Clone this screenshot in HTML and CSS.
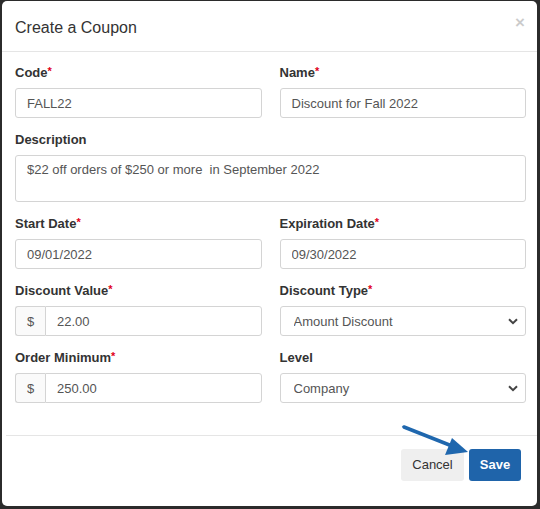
FILE: index.html
```html
<!DOCTYPE html>
<html lang="en">
<head>
    <meta charset="UTF-8">
    <meta name="viewport" content="width=device-width, initial-scale=1.0">
    <title>Create a Coupon</title>
    <link rel="stylesheet" href="styles.css">
</head>
<body>
    <div class="modal">
        <div class="modal-header">
            <h4 class="modal-title">Create a Coupon</h4>
            <button class="close" type="button">&times;</button>
        </div>
        <form class="modal-body">
            <div class="row">
                <div class="field">
                    <label>Code<span class="req">*</span></label>
                    <input type="text" value="FALL22">
                </div>
                <div class="field">
                    <label>Name<span class="req">*</span></label>
                    <input type="text" value="Discount for Fall 2022">
                </div>
            </div>
            <div class="field">
                <label>Description</label>
                <textarea>$22 off orders of $250 or more  in September 2022</textarea>
            </div>
            <div class="row">
                <div class="field">
                    <label>Start Date<span class="req">*</span></label>
                    <input type="text" value="09/01/2022">
                </div>
                <div class="field">
                    <label>Expiration Date<span class="req">*</span></label>
                    <input type="text" value="09/30/2022">
                </div>
            </div>
            <div class="row">
                <div class="field">
                    <label>Discount Value<span class="req">*</span></label>
                    <div class="input-group">
                        <span class="addon">$</span>
                        <input type="text" value="22.00">
                    </div>
                </div>
                <div class="field">
                    <label>Discount Type<span class="req">*</span></label>
                    <div class="select-wrap">
                        <select>
                            <option>Amount Discount</option>
                            <option>Percent Discount</option>
                        </select>
                        <svg class="chevron" width="10" height="7" viewBox="0 0 10 7"><path d="M1 1.2 L5 5.2 L9 1.2" fill="none" stroke="#444" stroke-width="2"/></svg>
                    </div>
                </div>
            </div>
            <div class="row">
                <div class="field">
                    <label>Order Minimum<span class="req">*</span></label>
                    <div class="input-group">
                        <span class="addon">$</span>
                        <input type="text" value="250.00">
                    </div>
                </div>
                <div class="field">
                    <label>Level</label>
                    <div class="select-wrap">
                        <select>
                            <option>Company</option>
                            <option>Location</option>
                        </select>
                        <svg class="chevron" width="10" height="7" viewBox="0 0 10 7"><path d="M1 1.2 L5 5.2 L9 1.2" fill="none" stroke="#444" stroke-width="2"/></svg>
                    </div>
                </div>
            </div>
        </form>
        <div class="modal-footer">
            <button class="btn btn-default" type="button">Cancel</button>
            <button class="btn btn-primary" type="button">Save</button>
            <!-- pointer to the save button -->
            <svg class="pointer" width="80" height="40" viewBox="0 0 80 40">
                <line x1="2" y1="2" x2="50" y2="21" stroke="#1f67ae" stroke-width="3.5" stroke-linecap="round"/>
                <polygon points="66,27 43,30 50,13" fill="#1f67ae"/>
            </svg>
        </div>
    </div>
</body>
</html>
```
FILE: styles.css
```css
* {
    box-sizing: border-box;
}
body {
    margin: 0;
    width: 540px;
    height: 509px;
    overflow: hidden;
    background-color: #2b2b2b;
    font-family: "Liberation Sans", Arial, sans-serif;
    font-size: 13px;
    color: #333;
}
.modal {
    margin: 1px 0 0 2px;
    width: 535px;
    height: 505px;
    background-color: #fff;
    border-radius: 5px;
    display: flex;
    flex-direction: column;
}
.modal-header {
    height: 51px;
    border-bottom: 1px solid #e5e5e5;
    display: flex;
    justify-content: space-between;
    align-items: center;
    padding: 0 12px 0 13px;
}
.modal-title {
    margin: 0;
    font-size: 16px;
    font-weight: normal;
    color: #333;
    padding-top: 3px;
}
.close {
    background: none;
    border: none;
    padding: 0;
    font-family: "Liberation Sans", Arial, sans-serif;
    font-size: 17px;
    font-weight: bold;
    color: #000;
    opacity: 0.2;
    line-height: 1;
    margin-top: -8px;
}
.modal-body {
    padding: 11px 11px 0 13px;
    height: 383px;
    display: flex;
    flex-direction: column;
    gap: 12px;
}
.row {
    display: flex;
    gap: 18px;
}
.row .field {
    flex: 1;
}
.field label {
    display: block;
    font-weight: bold;
    line-height: 20px;
    height: 20px;
    margin-bottom: 5px;
}
.req {
    color: #e0001b;
    font-size: 11px;
    line-height: 0;
    position: relative;
    top: -2px;
}
input, textarea, select {
    font-family: "Liberation Sans", Arial, sans-serif;
    font-size: 13px;
    color: #555;
    border: 1px solid #d4d4d4;
    border-radius: 3px;
    background-color: #fff;
    outline: none;
}
input {
    display: block;
    width: 100%;
    height: 30px;
    padding: 0 11px;
}
textarea {
    display: block;
    width: 100%;
    height: 47px;
    padding: 5px 11px;
    resize: none;
    line-height: 18px;
}
.input-group {
    display: flex;
}
.input-group .addon {
    width: 30px;
    height: 30px;
    border: 1px solid #d4d4d4;
    border-right: none;
    border-radius: 3px 0 0 3px;
    background-color: #fafafa;
    color: #555;
    display: flex;
    align-items: center;
    justify-content: center;
}
.input-group input {
    flex: 1;
    border-radius: 0 3px 3px 0;
}
.select-wrap {
    position: relative;
}
select {
    display: block;
    width: 100%;
    height: 30px;
    padding: 0 13px;
    -webkit-appearance: none;
    appearance: none;
}
.chevron {
    position: absolute;
    right: 8px;
    top: 12px;
    pointer-events: none;
}
.modal-footer {
    position: relative;
    margin-left: 4px;
    border-top: 1px solid #e5e5e5;
    padding: 13px 16px 0 0;
    display: flex;
    justify-content: flex-end;
    gap: 5px;
}
.btn {
    height: 32px;
    border: none;
    border-radius: 3px;
    font-family: "Liberation Sans", Arial, sans-serif;
    font-size: 13px;
    padding: 0 0 2px;
}
.btn-default {
    background-color: #efefef;
    color: #333;
    width: 63px;
}
.btn-primary {
    background-color: #1f64aa;
    color: #fff;
    font-weight: bold;
    width: 52px;
}
.pointer {
    position: absolute;
    left: 396px;
    top: -11px;
    overflow: visible;
}
```
